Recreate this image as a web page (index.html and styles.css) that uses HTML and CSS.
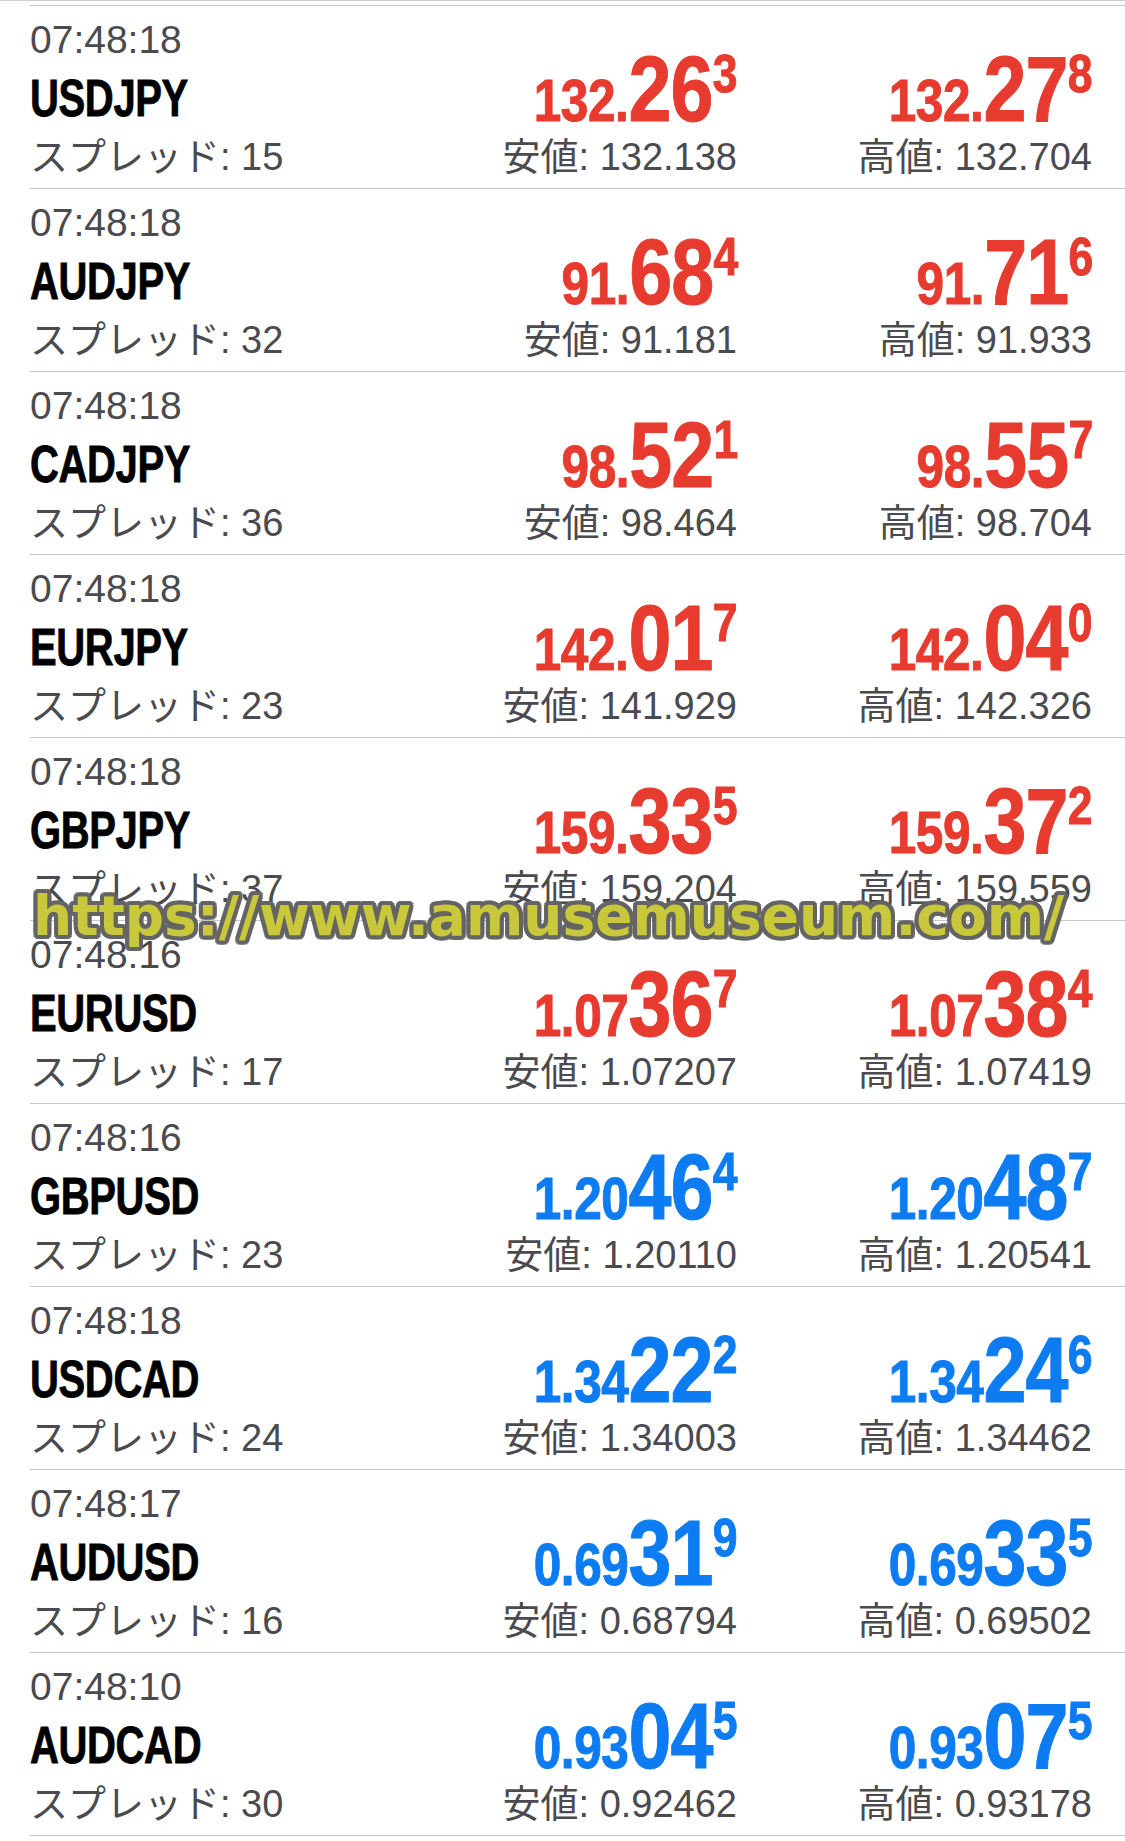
FILE: index.html
```html
<!DOCTYPE html>
<html lang="ja">
<head>
<meta charset="utf-8">
<title>Rates</title>
<link rel="stylesheet" href="styles.css">
</head>
<body>
<div class="list">
  <div class="row red">
    <div class="col-left"><div class="time">07:48:18</div><div class="sym"><span>USDJPY</span></div><div class="spread">スプレッド: 15</div></div>
    <div class="col-num"><div class="price"><span class="pw"><span class="sm">132.</span><span class="big">26</span><span class="sup">3</span></span></div><div class="sub">安値: 132.138</div></div>
    <div class="col-num"><div class="price"><span class="pw"><span class="sm">132.</span><span class="big">27</span><span class="sup">8</span></span></div><div class="sub">高値: 132.704</div></div>
  </div>
  <div class="row red">
    <div class="col-left"><div class="time">07:48:18</div><div class="sym"><span>AUDJPY</span></div><div class="spread">スプレッド: 32</div></div>
    <div class="col-num"><div class="price"><span class="pw"><span class="sm">91.</span><span class="big">68</span><span class="sup">4</span></span></div><div class="sub">安値: 91.181</div></div>
    <div class="col-num"><div class="price"><span class="pw"><span class="sm">91.</span><span class="big">71</span><span class="sup">6</span></span></div><div class="sub">高値: 91.933</div></div>
  </div>
  <div class="row red">
    <div class="col-left"><div class="time">07:48:18</div><div class="sym"><span>CADJPY</span></div><div class="spread">スプレッド: 36</div></div>
    <div class="col-num"><div class="price"><span class="pw"><span class="sm">98.</span><span class="big">52</span><span class="sup">1</span></span></div><div class="sub">安値: 98.464</div></div>
    <div class="col-num"><div class="price"><span class="pw"><span class="sm">98.</span><span class="big">55</span><span class="sup">7</span></span></div><div class="sub">高値: 98.704</div></div>
  </div>
  <div class="row red">
    <div class="col-left"><div class="time">07:48:18</div><div class="sym"><span>EURJPY</span></div><div class="spread">スプレッド: 23</div></div>
    <div class="col-num"><div class="price"><span class="pw"><span class="sm">142.</span><span class="big">01</span><span class="sup">7</span></span></div><div class="sub">安値: 141.929</div></div>
    <div class="col-num"><div class="price"><span class="pw"><span class="sm">142.</span><span class="big">04</span><span class="sup">0</span></span></div><div class="sub">高値: 142.326</div></div>
  </div>
  <div class="row red">
    <div class="col-left"><div class="time">07:48:18</div><div class="sym"><span>GBPJPY</span></div><div class="spread">スプレッド: 37</div></div>
    <div class="col-num"><div class="price"><span class="pw"><span class="sm">159.</span><span class="big">33</span><span class="sup">5</span></span></div><div class="sub">安値: 159.204</div></div>
    <div class="col-num"><div class="price"><span class="pw"><span class="sm">159.</span><span class="big">37</span><span class="sup">2</span></span></div><div class="sub">高値: 159.559</div></div>
  </div>
  <div class="row red">
    <div class="col-left"><div class="time">07:48:16</div><div class="sym"><span>EURUSD</span></div><div class="spread">スプレッド: 17</div></div>
    <div class="col-num"><div class="price"><span class="pw"><span class="sm">1.07</span><span class="big">36</span><span class="sup">7</span></span></div><div class="sub">安値: 1.07207</div></div>
    <div class="col-num"><div class="price"><span class="pw"><span class="sm">1.07</span><span class="big">38</span><span class="sup">4</span></span></div><div class="sub">高値: 1.07419</div></div>
  </div>
  <div class="row blue">
    <div class="col-left"><div class="time">07:48:16</div><div class="sym"><span>GBPUSD</span></div><div class="spread">スプレッド: 23</div></div>
    <div class="col-num"><div class="price"><span class="pw"><span class="sm">1.20</span><span class="big">46</span><span class="sup">4</span></span></div><div class="sub">安値: 1.20110</div></div>
    <div class="col-num"><div class="price"><span class="pw"><span class="sm">1.20</span><span class="big">48</span><span class="sup">7</span></span></div><div class="sub">高値: 1.20541</div></div>
  </div>
  <div class="row blue">
    <div class="col-left"><div class="time">07:48:18</div><div class="sym"><span>USDCAD</span></div><div class="spread">スプレッド: 24</div></div>
    <div class="col-num"><div class="price"><span class="pw"><span class="sm">1.34</span><span class="big">22</span><span class="sup">2</span></span></div><div class="sub">安値: 1.34003</div></div>
    <div class="col-num"><div class="price"><span class="pw"><span class="sm">1.34</span><span class="big">24</span><span class="sup">6</span></span></div><div class="sub">高値: 1.34462</div></div>
  </div>
  <div class="row blue">
    <div class="col-left"><div class="time">07:48:17</div><div class="sym"><span>AUDUSD</span></div><div class="spread">スプレッド: 16</div></div>
    <div class="col-num"><div class="price"><span class="pw"><span class="sm">0.69</span><span class="big">31</span><span class="sup">9</span></span></div><div class="sub">安値: 0.68794</div></div>
    <div class="col-num"><div class="price"><span class="pw"><span class="sm">0.69</span><span class="big">33</span><span class="sup">5</span></span></div><div class="sub">高値: 0.69502</div></div>
  </div>
  <div class="row blue">
    <div class="col-left"><div class="time">07:48:10</div><div class="sym"><span>AUDCAD</span></div><div class="spread">スプレッド: 30</div></div>
    <div class="col-num"><div class="price"><span class="pw"><span class="sm">0.93</span><span class="big">04</span><span class="sup">5</span></span></div><div class="sub">安値: 0.92462</div></div>
    <div class="col-num"><div class="price"><span class="pw"><span class="sm">0.93</span><span class="big">07</span><span class="sup">5</span></span></div><div class="sub">高値: 0.93178</div></div>
  </div>
</div>
<div class="watermark">https://www.amusemuseum.com/</div>
</body>
</html>
```
FILE: styles.css
```css
html, body {
  margin: 0;
  padding: 0;
  background: #ffffff;
}
body {
  position: relative;
  width: 1125px;
  height: 1841px;
  overflow: hidden;
  font-family: "Liberation Sans", "Noto Sans CJK JP", sans-serif;
  color: #4a4a4f;
}
.list {
  border-top: 1px solid #cfcfcf;
  padding-top: 4px;
}
.row {
  margin-left: 30px;
  border-top: 1px solid #c8c8c8;
  height: 182px;
  box-sizing: content-box;
  display: grid;
  grid-template-columns: 1fr 300px 355px;
  padding-right: 33px;
}
.row:last-child {
  border-bottom: 1px solid #c8c8c8;
}
.col-left {
  padding-top: 6px;
}
.time {
  font-size: 39px;
  line-height: 56px;
  height: 56px;
  white-space: nowrap;
}
.sym {
  font-family: "Liberation Sans", sans-serif;
  font-weight: 700;
  font-size: 52px;
  line-height: 60px;
  height: 60px;
  color: #000;
  white-space: nowrap;
}
.sym span {
  display: inline-block;
  transform: scaleX(0.77);
  transform-origin: left center;
  letter-spacing: -0.5px;
  -webkit-text-stroke: 0.8px #000;
}
.spread {
  font-size: 38px;
  line-height: 58px;
  height: 58px;
  white-space: nowrap;
}
.col-num {
  text-align: right;
  padding-top: 34px;
}
.price {
  font-family: "Liberation Sans", sans-serif;
  font-weight: 700;
  font-size: 92px;
  line-height: 98px;
  height: 98px;
  white-space: nowrap;
}
.price .pw {
  display: inline-block;
  transform: scaleX(0.84);
  transform-origin: right center;
  letter-spacing: -1px;
  -webkit-text-stroke: 1px currentColor;
}
.red .price { color: #e63b2e; }
.blue .price { color: #0d7cf2; }
.price .sm {
  font-size: 59px;
  line-height: 1;
  letter-spacing: -0.5px;
}
.price .sup {
  font-size: 53px;
  line-height: 1;
  vertical-align: 29px;
}
.sub {
  font-size: 38px;
  line-height: 38px;
  height: 38px;
  white-space: nowrap;
}
.watermark {
  position: absolute;
  left: 33px;
  top: 889px;
  font-family: "DejaVu Sans", sans-serif;
  font-weight: 700;
  font-size: 55px;
  line-height: 55px;
  white-space: nowrap;
  color: #c8c83a;
  text-shadow:
    4px 0 0 rgba(100,100,100,0.85), -4px 0 0 rgba(100,100,100,0.85),
    0 4px 0 rgba(100,100,100,0.85), 0 -4px 0 rgba(100,100,100,0.85),
    3px 3px 0 rgba(100,100,100,0.85), -3px 3px 0 rgba(100,100,100,0.85),
    3px -3px 0 rgba(100,100,100,0.85), -3px -3px 0 rgba(100,100,100,0.85),
    2px 4px 0 rgba(100,100,100,0.85), -2px 4px 0 rgba(100,100,100,0.85),
    2px -4px 0 rgba(100,100,100,0.85), -2px -4px 0 rgba(100,100,100,0.85),
    4px 2px 0 rgba(100,100,100,0.85), -4px 2px 0 rgba(100,100,100,0.85),
    4px -2px 0 rgba(100,100,100,0.85), -4px -2px 0 rgba(100,100,100,0.85);
}
```
